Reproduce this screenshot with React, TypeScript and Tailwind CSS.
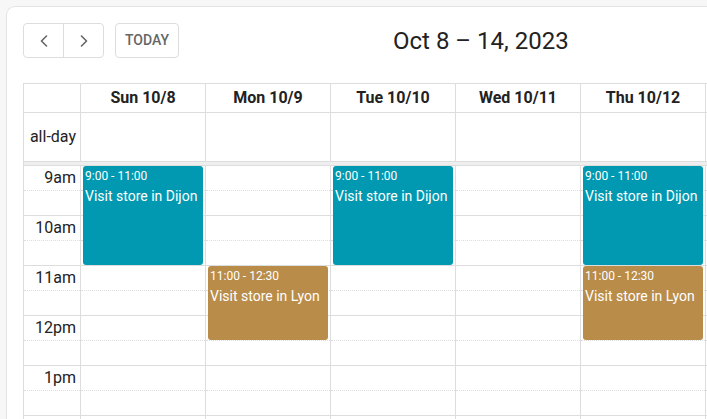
// Week view calendar — toolbar + day headers + all-day row + time grid with events.

const DAYS = ['Sun 10/8', 'Mon 10/9', 'Tue 10/10', 'Wed 10/11', 'Thu 10/12', 'Fri 10/13', 'Sat 10/14']

interface CalEvent {
  day: number
  start: number
  end: number
  time: string
  title: string
  color: string
}

const EVENTS: CalEvent[] = [
  { day: 0, start: 9, end: 11, time: '9:00 - 11:00', title: 'Visit store in Dijon', color: 'bg-[#0099b1]' },
  { day: 1, start: 11, end: 12.5, time: '11:00 - 12:30', title: 'Visit store in Lyon', color: 'bg-[#b98c49]' },
  { day: 2, start: 9, end: 11, time: '9:00 - 11:00', title: 'Visit store in Dijon', color: 'bg-[#0099b1]' },
  { day: 4, start: 9, end: 11, time: '9:00 - 11:00', title: 'Visit store in Dijon', color: 'bg-[#0099b1]' },
  { day: 4, start: 11, end: 12.5, time: '11:00 - 12:30', title: 'Visit store in Lyon', color: 'bg-[#b98c49]' },
]

const FIRST_HOUR = 9
const LAST_HOUR = 18
const SLOT_PX = 25 // one half hour

// half-hour slots from 9am up to 6pm
const SLOTS = Array.from({ length: (LAST_HOUR - FIRST_HOUR) * 2 }, (_, i) => ({
  hour: FIRST_HOUR + Math.floor(i / 2),
  isHour: i % 2 === 0,
}))

function hourLabel(h: number) {
  const suffix = h < 12 ? 'am' : 'pm'
  return `${h % 12 || 12}${suffix}`
}

function Chevron({ dir }: { dir: 'left' | 'right' }) {
  return (
    <svg width="8" height="12" viewBox="0 0 8 12" fill="none">
      <polyline
        points={dir === 'left' ? '6.5,1 1.5,6 6.5,11' : '1.5,1 6.5,6 1.5,11'}
        stroke="#666"
        strokeWidth="1.6"
        strokeLinecap="round"
        strokeLinejoin="round"
      />
    </svg>
  )
}

export default function App() {
  return (
    <div className="h-screen w-screen overflow-hidden bg-[#f7f7f7] font-['Roboto','Liberation_Sans',sans-serif] text-[#222]">
      <div className="ml-[6px] mt-[6px] w-[1000px] rounded-[9px] border border-[#e4e4e4] bg-white p-4">
        {/* Toolbar */}
        <div className="flex h-[35px] items-center">
          <div className="flex h-full rounded-[4px] border border-[#ddd]">
            <button className="flex w-[39px] items-center justify-center">
              <Chevron dir="left" />
            </button>
            <button className="flex w-[40px] items-center justify-center border-l border-[#ddd]">
              <Chevron dir="right" />
            </button>
          </div>
          <button className="ml-[11px] flex h-full w-[64px] items-center justify-center rounded-[4px] border border-[#ddd] text-[14px] font-medium text-[#666]">
            TODAY
          </button>
          <h2 className="ml-[214px] text-[24px] font-normal text-[#222]">Oct 8 – 14, 2023</h2>
        </div>

        {/* Calendar grid */}
        <div className="mt-[25px] w-fit border-b border-r border-[#ddd]">
          {/* Day headers */}
          <div className="grid grid-cols-[57px_repeat(7,125px)]">
            <div className="h-[29px] border-l border-t border-[#ddd]" />
            {DAYS.map((d) => (
              <div
                key={d}
                className="flex h-[29px] items-center justify-center border-l border-t border-[#ddd] text-[16px] leading-6 font-bold"
              >
                {d}
              </div>
            ))}
          </div>

          {/* All-day row */}
          <div className="grid grid-cols-[57px_repeat(7,125px)]">
            <div className="flex h-[49px] items-center justify-end border-l border-t border-[#ddd] pr-1 text-[16px] leading-6">
              all-day
            </div>
            {DAYS.map((d) => (
              <div key={d} className="h-[49px] border-l border-t border-[#ddd]" />
            ))}
          </div>

          {/* Divider */}
          <div className="h-[4px] border-l border-t border-[#ddd] bg-[#eee]" />

          {/* Time grid */}
          <div className="flex">
            <div className="w-[57px] border-l border-[#ddd]">
              {SLOTS.map((s, i) => (
                <div
                  key={i}
                  className={`h-[25px] border-t border-[#ddd] pr-1 text-right text-[16px] leading-6 ${s.isHour ? 'border-solid' : 'border-dotted'}`}
                >
                  {s.isHour ? hourLabel(s.hour) : ''}
                </div>
              ))}
            </div>
            {DAYS.map((d, di) => (
              <div key={d} className="relative w-[125px] border-l border-[#ddd]">
                {SLOTS.map((s, i) => (
                  <div
                    key={i}
                    className={`h-[25px] border-t border-[#ddd] ${s.isHour ? 'border-solid' : 'border-dotted'}`}
                  />
                ))}
                {EVENTS.filter((e) => e.day === di).map((e, i) => (
                  <div
                    key={i}
                    className={`absolute left-[2px] right-[2px] overflow-hidden rounded-[3px] pl-[2px] text-white ${e.color}`}
                    style={{
                      top: (e.start - FIRST_HOUR) * 2 * SLOT_PX + 1,
                      height: (e.end - e.start) * 2 * SLOT_PX - 1,
                    }}
                  >
                    <div className="pt-[2px] text-[12px] leading-4">{e.time}</div>
                    <div className="mt-[2px] text-[14px] leading-5">{e.title}</div>
                  </div>
                ))}
              </div>
            ))}
          </div>
        </div>
      </div>
    </div>
  )
}
